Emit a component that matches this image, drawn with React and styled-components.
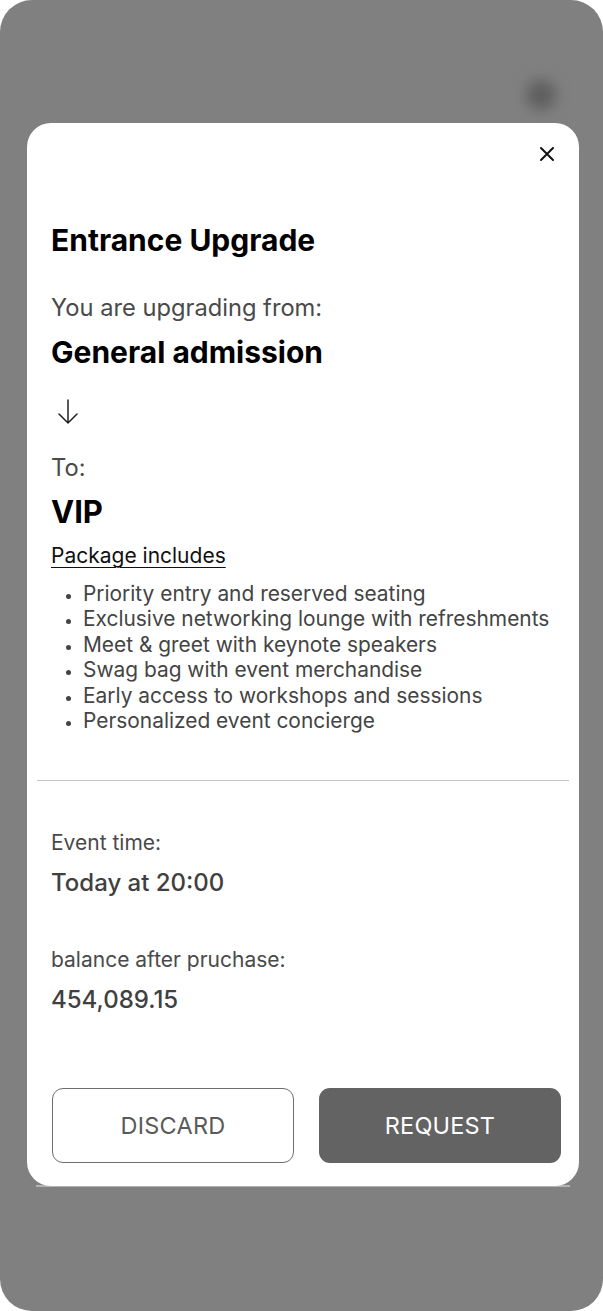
import React from 'react';
import styled, { createGlobalStyle } from 'styled-components';

const GlobalStyle = createGlobalStyle`
  html, body {
    margin: 0;
    padding: 0;
    background: #ffffff;
  }
  body {
    font-family: Inter, "Liberation Sans", Arial, sans-serif;
  }
  * {
    box-sizing: border-box;
  }
`;

const Screen = styled.div`
  position: relative;
  width: 603px;
  height: 1311px;
  background: #808080;
  border-radius: 32px;
  overflow: hidden;
  padding: 123px 24px 0 27px;
`;

const BlurDot = styled.div`
  position: absolute;
  top: 80px;
  left: 526px;
  width: 30px;
  height: 30px;
  border-radius: 50%;
  background: #5e5e5e;
  filter: blur(7px);
`;

const Modal = styled.div`
  position: relative;
  width: 552px;
  background: #ffffff;
  border-radius: 24px;
  padding: 23px 0 23px 0;
  z-index: 1;
`;

const SheetEdge = styled.div`
  height: 2px;
  margin: -1px 9px 0 9px;
  background: #b3b3b3;
`;

const CloseRow = styled.div`
  display: flex;
  justify-content: flex-end;
  padding-right: 24px;
`;

const CloseButton = styled.button`
  width: 16px;
  height: 16px;
  padding: 0;
  border: none;
  background: none;
  display: flex;
  align-items: center;
  justify-content: center;
  cursor: pointer;
`;

const Body = styled.div`
  padding: 0 18px 0 24px;
`;

const Title = styled.h1`
  margin: 61px 0 0 0;
  font-size: 30px;
  line-height: 34px;
  font-weight: 700;
  color: #000;
`;

const Label = styled.p`
  margin: ${p => p.$top || 0}px 0 0 0;
  font-size: ${p => p.$size || 23.7}px;
  line-height: ${p => p.$lh || 28}px;
  color: #4a4a4a;
  font-weight: 400;
`;

const Tier = styled.h2`
  margin: ${p => p.$top}px 0 0 0;
  font-size: ${p => p.$size || 30}px;
  line-height: ${p => p.$lh || 34}px;
  font-weight: 700;
  color: #000;
`;

const ArrowWrap = styled.div`
  margin: 30px 0 0 6px;
  width: 22px;
  height: 26px;
  display: flex;
`;

const PackageLink = styled.a`
  display: inline-block;
  margin-top: 14px;
  font-size: 21px;
  line-height: 24px;
  color: #111;
  text-decoration: underline;
  text-underline-offset: 4px;
  text-decoration-thickness: 1px;
`;

const PerkList = styled.ul`
  margin: 13px 0 0 0;
  padding-left: 32px;
  list-style: disc;
`;

const Perk = styled.li`
  font-size: 20.9px;
  line-height: 25.4px;
  color: #444;
  &::marker {
    font-size: 16px;
  }
`;

const Divider = styled.hr`
  margin: 47px 10px 0 10px;
  border: none;
  border-top: 1.5px solid #c6c6c6;
`;

const Value = styled.p`
  margin: 14px 0 0 0;
  font-size: 24px;
  line-height: 28px;
  font-weight: 500;
  color: #404040;
`;

const Actions = styled.div`
  display: grid;
  grid-template-columns: 1fr 1fr;
  gap: 25px;
  margin: 74px 0 0 1px;
`;

const ActionButton = styled.button`
  height: 75px;
  border-radius: 11px;
  font-family: Inter, "Liberation Sans", Arial, sans-serif;
  font-size: 23.5px;
  font-weight: 400;
  text-transform: uppercase;
  letter-spacing: 0.2px;
  cursor: pointer;
  border: ${p => (p.$primary ? 'none' : '1.5px solid #6e6e6e')};
  background: ${p => (p.$primary ? '#636363' : '#ffffff')};
  color: ${p => (p.$primary ? '#ffffff' : '#5a5a5a')};
`;

const perks = [
  'Priority entry and reserved seating',
  'Exclusive networking lounge with refreshments',
  'Meet & greet with keynote speakers',
  'Swag bag with event merchandise',
  'Early access to workshops and sessions',
  'Personalized event concierge',
];

export default function App() {
  return (
    <>
      <GlobalStyle />
      <Screen>
        <BlurDot />
        <Modal>
          <CloseRow>
            <CloseButton aria-label="Close">
              <svg width="16" height="16" viewBox="0 0 16 16">
                <path d="M2 2 L14 14 M14 2 L2 14" stroke="#111" strokeWidth="2" strokeLinecap="round" />
              </svg>
            </CloseButton>
          </CloseRow>
          <Body>
            <Title>Entrance Upgrade</Title>
            <Label $top={37}>You are upgrading from:</Label>
            <Tier $top={13}>General admission</Tier>
            <ArrowWrap>
              <svg width="22" height="26" viewBox="0 0 22 26">
                <path d="M11 1 V24 M2 15 L11 24 L20 15" fill="none" stroke="#222" strokeWidth="1.5" strokeLinecap="round" strokeLinejoin="round" />
              </svg>
            </ArrowWrap>
            <Label $top={29}>To:</Label>
            <Tier $top={12} $size={31} $lh={36}>VIP</Tier>
            <PackageLink href="#">Package includes</PackageLink>
            <PerkList>
              {perks.map((perk, i) => (
                <Perk key={i}>{perk}</Perk>
              ))}
            </PerkList>
          </Body>
          <Divider />
          <Body>
            <Label $top={50} $size={21} $lh={24}>Event time:</Label>
            <Value>Today at 20:00</Value>
            <Label $top={51} $size={21} $lh={24}>balance after pruchase:</Label>
            <Value>454,089.15</Value>
            <Actions>
              <ActionButton>Discard</ActionButton>
              <ActionButton $primary>Request</ActionButton>
            </Actions>
          </Body>
        </Modal>
        <SheetEdge />
      </Screen>
    </>
  );
}
